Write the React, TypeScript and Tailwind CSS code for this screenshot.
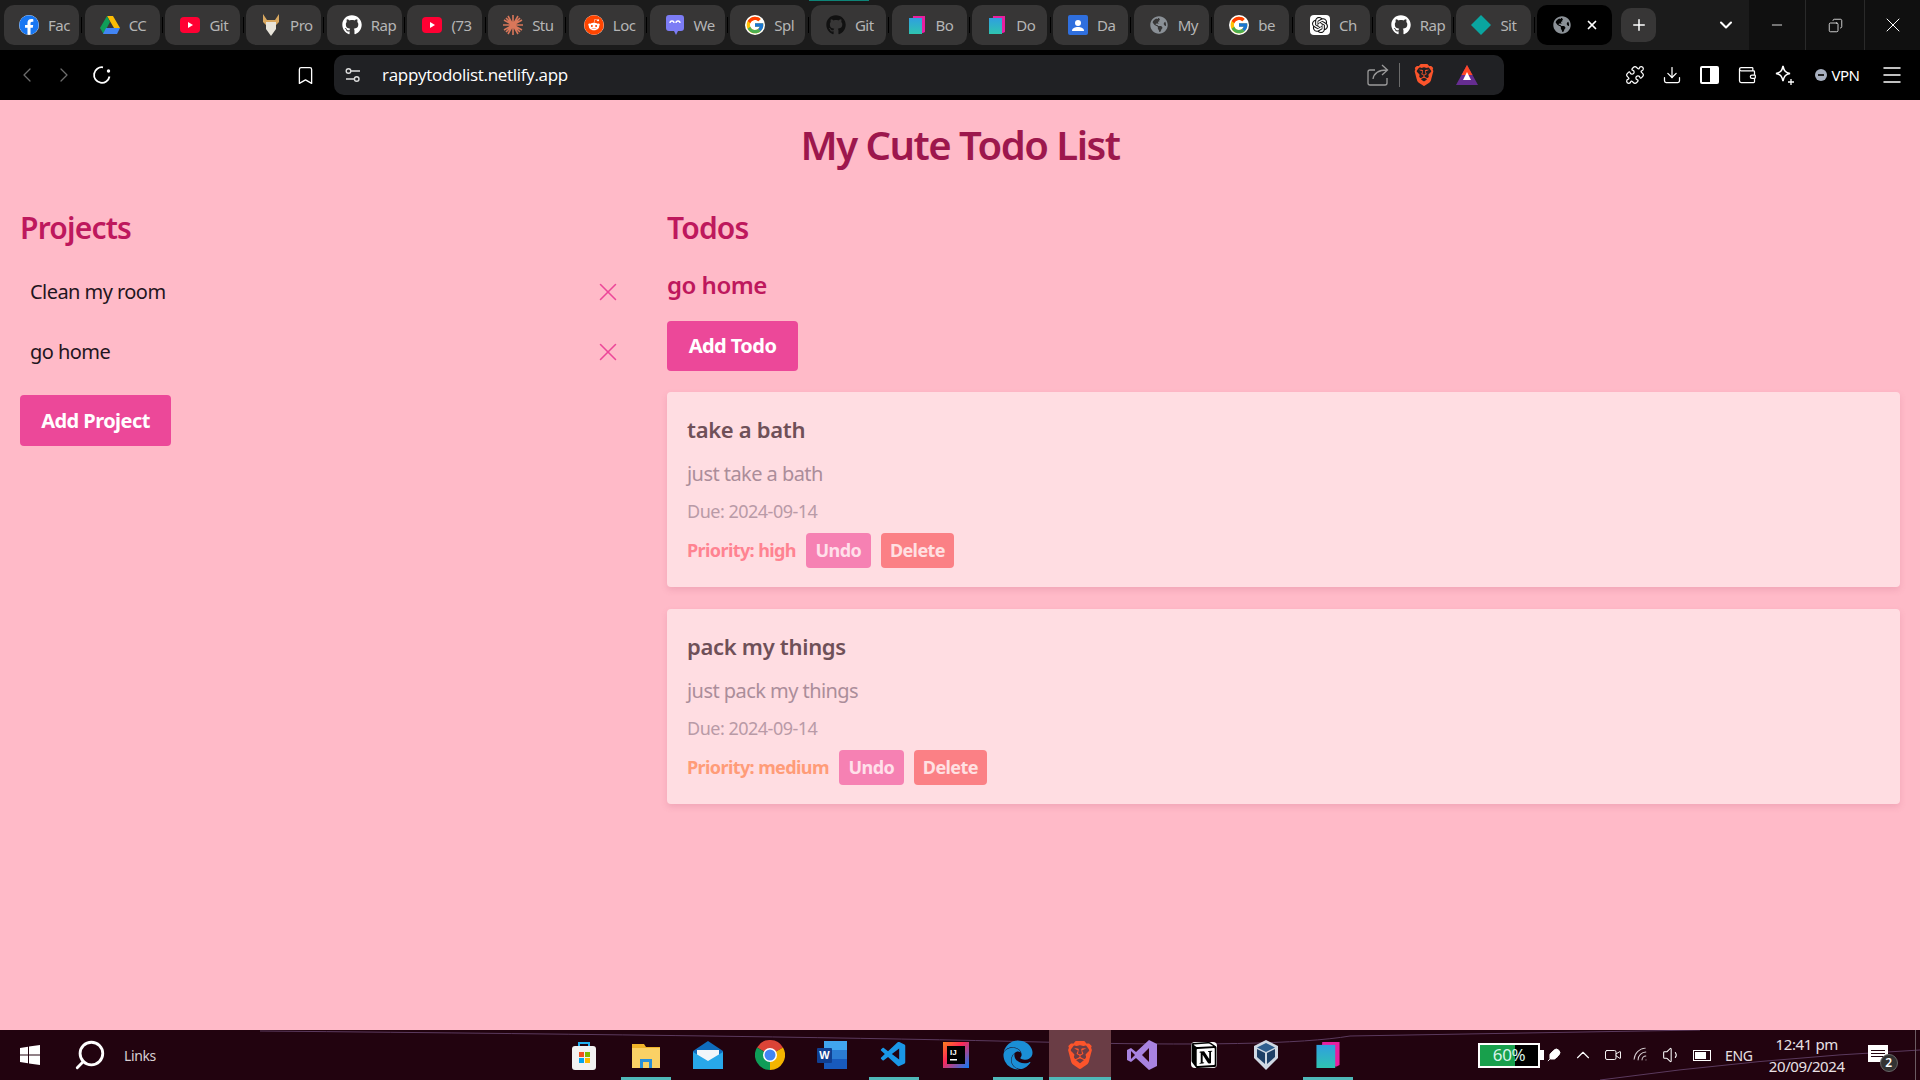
import { FaEdge, FaFacebook, FaGithub, FaGlobeAmericas, FaReddit } from "react-icons/fa";
import { FcGoogle } from "react-icons/fc";
import { SiBrave, SiNotion, SiOpenai } from "react-icons/si";
import { VscVscode } from "react-icons/vsc";
import {
  Bookmark,
  ChevronDown,
  ChevronLeft,
  ChevronRight,
  ChevronUp,
  Copy,
  Download,
  Feather,
  Menu,
  Minus,
  Plus,
  Puzzle,
  Search,
  Volume1,
  Video,
  Wallet,
  Wifi,
  X,
} from "lucide-react";
import type { ReactNode } from "react";

const font = "font-['Noto_Sans','Open_Sans',sans-serif]";

// small drawn icons
const YouTube = () => (
  <svg width="20" height="16" viewBox="0 0 20 16">
    <rect width="20" height="16" rx="4" fill="#ff0033" />
    <path d="M8 5l5 3-5 3z" fill="#fff" />
  </svg>
);
const Drive = () => (
  <svg width="20" height="18" viewBox="0 0 20 18">
    <path d="M7 0h6l7 12h-6z" fill="#fbbc04" />
    <path d="M7 0l3 6-6.500 12L0 12z" fill="#0f9d58" />
    <path d="M6 12h14l-3 6H3z" fill="#4285f4" />
  </svg>
);
const Viking = () => (
  <svg width="18" height="22" viewBox="0 0 18 22">
    <path d="M1 0l4 6h8l4-6 0 8-3 3H4L1 8z" fill="#d9a860" />
    <path d="M4 8h10v7l-5 7-5-7z" fill="#e8e4da" />
  </svg>
);
const Burst = () => (
  <svg width="20" height="20" viewBox="0 0 20 20" stroke="#d9775a" strokeWidth="1.6">
    <path d="M10 0v20M0 10h20M3 3l14 14M17 3L3 17M5 1l10 18M15 1L5 19M1 5l18 10M19 5L1 15" />
  </svg>
);
const Chat = () => (
  <svg width="20" height="22" viewBox="0 0 20 22">
    <path d="M4 1h12a3 3 0 013 3v10a3 3 0 01-3 3h-3l-2 4-2-4H4a3 3 0 01-3-3V4a3 3 0 013-3z" fill="#7c7cf5" />
    <path d="M5 9a2 2 0 014 0M11 9a2 2 0 014 0" stroke="#fff" strokeWidth="1.3" fill="none" />
  </svg>
);
const Stack = ({ size = 18 }: { size?: number }) => (
  <svg width={size} height={size} viewBox="0 0 18 18">
    <path d="M5 0h12v16l-2 1H4z" fill="#e81fa0" />
    <path d="M1 2h13v16H1z" fill="url(#stackFill)" />
    <defs>
      <linearGradient id="stackFill" x1="0" y1="0" x2="0" y2="1">
        <stop offset="0" stopColor="#2f9fe0" />
        <stop offset="1" stopColor="#2fc4b0" />
      </linearGradient>
    </defs>
  </svg>
);
const Contact = () => (
  <svg width="20" height="20" viewBox="0 0 20 20">
    <rect width="20" height="20" rx="2" fill="#2f6fde" />
    <circle cx="10" cy="8" r="3" fill="#fff" />
    <path d="M4 16c0-3 3-4 6-4s6 1 6 4z" fill="#fff" />
  </svg>
);
const Diamond = () => (
  <svg width="20" height="20" viewBox="0 0 20 20">
    <path d="M10 0l10 10-10 10L0 10z" fill="#0aa5a0" />
  </svg>
);
const Bat = () => (
  <svg width="22" height="20" viewBox="0 0 22 20">
    <path d="M11 0l11 20H0z" fill="#662d91" />
    <path d="M11 0l5.500 10h-11z" fill="#ff4724" />
    <path d="M11 7l4 8H7z" fill="#fff" />
  </svg>
);
const Reload = () => (
  <svg width="20" height="20" viewBox="0 0 20 20" fill="none" stroke="#fff" strokeWidth="1.8">
    <path d="M17.500 11.500A7.800 7.800 0 1 1 11 2.300" />
    <circle cx="16.500" cy="6" r="1.700" fill="#fff" stroke="none" />
  </svg>
);
const SiteSettings = () => (
  <svg width="18" height="18" viewBox="0 0 18 18" fill="none" stroke="#ddd" strokeWidth="1.4">
    <circle cx="4.500" cy="5" r="2.300" />
    <path d="M7 5h9M2 13h8" />
    <circle cx="12.700" cy="13" r="2.300" />
  </svg>
);
const ShareArrow = () => (
  <svg width="22" height="22" viewBox="0 0 22 22" fill="none" stroke="#9a9a9a" strokeWidth="1.3">
    <path d="M8 6H3a2 2 0 00-2 2v11a2 2 0 002 2h15a2 2 0 002-2v-5" />
    <path d="M6 15c1-6 5-9 14-9M15 1l5.500 5-5.500 5" />
  </svg>
);
const Leo = () => (
  <svg width="22" height="22" viewBox="0 0 22 22" fill="none" stroke="#fff" strokeWidth="1.5">
    <path d="M9 2c1 5 2.500 6.500 7 7.500-4.500 1-6 2.500-7 7.500-1-5-2.500-6.500-7-7.500 4.500-1 6-2.500 7-7.500z" />
    <path d="M17 15v6M14 18h6" strokeWidth="1.300" />
  </svg>
);
const WinLogo = () => (
  <svg width="20" height="20" viewBox="0 0 20 20" fill="#fff">
    <path d="M0 3l8-1.200V9.500H0zM9 1.600L20 0v9.500H9zM0 10.500h8v7.700L0 17zM9 10.500h11V20L9 18.400z" />
  </svg>
);
const StoreIcon = () => (
  <svg width="24" height="29" viewBox="0 0 24 29">
    <path d="M7 7V2h10v5" fill="none" stroke="#22b0f0" strokeWidth="2" />
    <rect y="5" width="24" height="24" rx="3" fill="#f2f2f2" />
    <rect x="7" y="11" width="5" height="5" fill="#f25022" />
    <rect x="13" y="11" width="5" height="5" fill="#7fba00" />
    <rect x="7" y="17" width="5" height="5" fill="#00a4ef" />
    <rect x="13" y="17" width="5" height="5" fill="#ffb900" />
  </svg>
);
const FolderIcon = () => (
  <svg width="28" height="26" viewBox="0 0 28 26">
    <path d="M0 2h12l2 3h14v21H0z" fill="#f0b429" />
    <path d="M0 6h28v20H0z" fill="#fad165" />
    <path d="M8 26v-9h12v9h-3v-6h-6v6z" fill="#2a8fd8" />
  </svg>
);
const MailIcon = () => (
  <svg width="30" height="28" viewBox="0 0 30 28">
    <path d="M0 10L15 0l15 10v18H0z" fill="#0f6cbd" />
    <path d="M4 9h22v10l-11 6-11-6z" fill="#f2f6fa" />
    <path d="M0 11l15 9 15-9v17H0z" fill="#28a8ea" />
  </svg>
);
const ChromeIcon = () => (
  <svg width="30" height="30" viewBox="0 0 30 30">
    <path d="M15 15L2 7.500A15 15 0 0128 7.500z" fill="#db4437" />
    <path d="M15 15L28 7.500A15 15 0 0115 30z" fill="#f4b400" />
    <path d="M15 15v15A15 15 0 012 7.500z" fill="#0f9d58" />
    <circle cx="15" cy="15" r="7" fill="#fff" />
    <circle cx="15" cy="15" r="5.500" fill="#4285f4" />
  </svg>
);
const WordIcon = () => (
  <svg width="30" height="28" viewBox="0 0 30 28">
    <path d="M7 0h23v28H7z" fill="#2b7cd3" />
    <path d="M7 0h23v9H7z" fill="#41a5ee" />
    <path d="M7 18h23v10H7z" fill="#185abd" />
    <rect y="7" width="15" height="15" rx="1" fill="#103f91" />
    <text x="7.500" y="18" textAnchor="middle" fontSize="11" fontWeight="700" fill="#fff" fontFamily="Liberation Sans, sans-serif">W</text>
  </svg>
);
const IdeaIcon = () => (
  <svg width="26" height="26" viewBox="0 0 26 26">
    <defs>
      <linearGradient id="ideaFill" x1="0" y1="0" x2="1" y2="1">
        <stop offset="0" stopColor="#fc801d" />
        <stop offset="0.4" stopColor="#fe2857" />
        <stop offset="1" stopColor="#087cfa" />
      </linearGradient>
    </defs>
    <rect width="26" height="26" fill="url(#ideaFill)" />
    <rect x="4" y="4" width="18" height="18" fill="#000" />
    <text x="7" y="13" fontSize="8" fontWeight="700" fill="#fff" fontFamily="Liberation Sans, sans-serif">IJ</text>
    <rect x="7" y="17" width="7" height="1.500" fill="#fff" />
  </svg>
);
const VsIcon = () => (
  <svg width="30" height="30" viewBox="0 0 30 30">
    <path d="M22 0l8 4v22l-8 4L9 18l-5 4-4-2V10l4-2 5 4z" fill="#a883e0" />
    <path d="M22 8l-7 7 7 7z" fill="#2a0410" />
    <path d="M4 11l4 4-4 4z" fill="#2a0410" />
  </svg>
);
const VboxIcon = () => (
  <svg width="24" height="30" viewBox="0 0 24 30">
    <path d="M12 0l12 6v12l-12 12L0 18V6z" fill="#cfd8e3" />
    <path d="M12 3l9 4.500-9 4.500-9-4.500z" fill="#2f5f8f" />
    <path d="M3 9l8 4v11l-8-7z" fill="#1d3f66" />
    <path d="M21 9l-8 4v11l8-7z" fill="#1d3f66" />
  </svg>
);

const tabs: { icon: ReactNode; label: string }[] = [
  { icon: <span className="flex rounded-full bg-white"><FaFacebook size={20} color="#1877f2" /></span>, label: "Fac" },
  { icon: <Drive />, label: "CC" },
  { icon: <YouTube />, label: "Git" },
  { icon: <Viking />, label: "Pro" },
  { icon: <FaGithub size={20} color="#fff" />, label: "Rap" },
  { icon: <YouTube />, label: "(73" },
  { icon: <Burst />, label: "Stu" },
  { icon: <span className="flex rounded-full bg-white"><FaReddit size={20} color="#ff4500" /></span>, label: "Loc" },
  { icon: <Chat />, label: "We" },
  { icon: <span className="flex rounded-full bg-white"><FcGoogle size={20} /></span>, label: "Spl" },
  { icon: <FaGithub size={20} color="#111" />, label: "Git" },
  { icon: <Stack />, label: "Bo" },
  { icon: <Stack />, label: "Do" },
  { icon: <Contact />, label: "Da" },
  { icon: <FaGlobeAmericas size={18} color="#8a9096" />, label: "My" },
  { icon: <span className="flex rounded-full bg-white"><FcGoogle size={20} /></span>, label: "be" },
  { icon: <span className="flex rounded-[4px] bg-white p-[2px]"><SiOpenai size={16} color="#111" /></span>, label: "Ch" },
  { icon: <FaGithub size={20} color="#fff" />, label: "Rap" },
  { icon: <Diamond />, label: "Sit" },
];

const apps: { icon: ReactNode; bar?: boolean }[] = [
  { icon: <StoreIcon /> },
  { icon: <FolderIcon />, bar: true },
  { icon: <MailIcon /> },
  { icon: <ChromeIcon /> },
  { icon: <WordIcon /> },
  { icon: <VscVscode size={30} color="#1a97e6" />, bar: true },
  { icon: <IdeaIcon /> },
  { icon: <FaEdge size={30} color="#1b8fd6" />, bar: true },
  { icon: <SiBrave size={28} color="#fb542b" />, bar: true },
  { icon: <VsIcon /> },
  { icon: <span className="flex rounded-[4px] bg-white"><SiNotion size={26} color="#000" /></span> },
  { icon: <VboxIcon /> },
  { icon: <Stack size={26} />, bar: true },
];

const todos = [
  { title: "take a bath", text: "just take a bath", priority: "high", tone: "text-[#ff8391]" },
  { title: "pack my things", text: "just pack my things", priority: "medium", tone: "text-[#ff9c78]" },
];

function Slot({ children, w = "w-[37.5px]" }: { children: ReactNode; w?: string }) {
  return <div className={`flex shrink-0 items-center justify-center ${w}`}>{children}</div>;
}

export default function App() {
  return (
    <div className={`flex h-screen w-full flex-col overflow-hidden bg-[#ffbac8] ${font}`}>
      {/* tab strip */}
      <div className="relative flex h-[50px] shrink-0 items-center bg-[#1b1b1b] pl-1">
        <div className="absolute left-[809px] top-0 h-px w-[60px] bg-[#0d8478]" />
        {tabs.map((t, i) => (
          <div key={i} className="flex items-center">
            <div className="flex h-10 w-[75px] items-center gap-[9px] rounded-[10px] bg-[#373636] pl-[15px]">
              <span className="flex w-5 shrink-0 justify-center">{t.icon}</span>
              <span className="whitespace-nowrap text-[15px] tracking-[-0.5px] text-[#b5b5b5]">{t.label}</span>
            </div>
            <div className="mx-[2.35px] h-4 w-px bg-black" />
          </div>
        ))}
        <div className="flex h-10 w-[75px] items-center justify-between rounded-[10px] bg-black pl-4 pr-[13px]">
          <FaGlobeAmericas size={18} color="#8a9096" />
          <X size={14} color="#fff" strokeWidth={3} />
        </div>
        <div className="ml-[9px] flex h-[34px] w-[35px] items-center justify-center rounded-[10px] bg-[#373636]">
          <Plus size={18} color="#fff" />
        </div>
        <div className="ml-[60px] flex w-5 justify-center">
          <ChevronDown size={20} color="#fff" strokeWidth={2.5} />
        </div>
        <div className="ml-auto flex h-full items-center bg-[#101010] text-white">
          <Slot w="w-[56px]"><Minus size={16} strokeWidth={1.25} /></Slot>
          <div className="flex h-full w-[59px] items-center justify-center border-l border-[#2a2a2a]">
            <Copy size={15} strokeWidth={1.25} className="-scale-x-100" />
          </div>
          <div className="flex h-full w-[56px] items-center justify-center border-l border-[#2a2a2a]">
            <X size={24} strokeWidth={1} />
          </div>
        </div>
      </div>

      {/* toolbar */}
      <div className="flex h-[50px] shrink-0 items-center bg-black pl-2 text-white">
        <Slot><ChevronLeft size={24} strokeWidth={1.25} color="#6d6d6d" /></Slot>
        <Slot><ChevronRight size={24} strokeWidth={1.25} color="#6d6d6d" /></Slot>
        <Slot><Reload /></Slot>
        <div className="ml-[166px]">
          <Slot><Bookmark size={21} strokeWidth={1.5} /></Slot>
        </div>
        <div className="ml-[10px] flex h-10 w-[1170px] shrink-0 items-center rounded-[10px] bg-[#202124]">
          <span className="ml-[10px] flex"><SiteSettings /></span>
          <span className="ml-[20px] font-['Open_Sans',sans-serif] text-[17px] tracking-[-0.3px] text-white">rappytodolist.netlify.app</span>
          <span className="ml-auto flex"><ShareArrow /></span>
          <div className="ml-[10px] h-6 w-px bg-[#6b6b6b]" />
          <span className="ml-[13px] flex"><SiBrave size={22} color="#fb542b" /></span>
          <span className="ml-[21px] mr-[26px] flex"><Bat /></span>
        </div>
        <div className="ml-[112px] flex items-center">
          <Slot><Puzzle size={20} strokeWidth={1.5} /></Slot>
          <Slot><Download size={20} strokeWidth={1.5} /></Slot>
          <Slot>
            <div className="flex h-[18px] w-[19px] rounded-[2px] border-2 border-white">
              <div className="h-full w-1/2" />
              <div className="h-full w-1/2 bg-white" />
            </div>
          </Slot>
          <Slot><Wallet size={20} strokeWidth={1.5} /></Slot>
          <Slot><Leo /></Slot>
        </div>
        <div className="ml-[11px] flex items-center gap-[5px]">
          <div className="flex h-3 w-3 items-center justify-center rounded-full bg-[#a8b0c0]">
            <div className="h-[2px] w-[6px] bg-[#222]" />
          </div>
          <span className="text-[15px] tracking-[-0.5px] text-white">VPN</span>
        </div>
        <Menu size={24} strokeWidth={1.5} className="ml-[21px]" />
      </div>

      {/* page */}
      <main className="min-h-0 flex-1 px-5 pt-[18px]">
        <h1 className="text-center text-[40px] leading-[54px] font-semibold tracking-[-1.5px] text-[#9d174d]">
          My Cute Todo List
        </h1>
        <div className="mt-[38px] flex gap-10">
          <section className="w-[607px] shrink-0">
            <h2 className="text-[30px] leading-[36px] font-semibold tracking-[-0.8px] text-[#be185d]">Projects</h2>
            <ul className="mt-4">
              {["Clean my room", "go home"].map((p) => (
                <li key={p} className="flex h-[60px] items-center justify-between pl-2.5 pr-1">
                  <span className="text-[20px] tracking-[-0.55px] text-[#1f1520]">{p}</span>
                  <X size={30} strokeWidth={1.25} className="text-[#ec4899]" />
                </li>
              ))}
            </ul>
            <button className="mt-[13px] h-[51px] w-[151px] rounded-[4px] bg-[#ec4899] text-[20px] font-bold tracking-[-0.55px] text-white">
              Add Project
            </button>
          </section>

          <section className="min-w-0 flex-1">
            <h2 className="text-[30px] leading-[36px] font-semibold tracking-[-0.8px] text-[#be185d]">Todos</h2>
            <h3 className="mt-[21px] text-[24px] leading-[36px] font-semibold tracking-[-0.5px] text-[#be185d]">go home</h3>
            <button className="mt-[18px] h-[50px] w-[131px] rounded-[4px] bg-[#ec4899] text-[20px] font-bold tracking-[-0.55px] text-white">
              Add Todo
            </button>
            <div className="mt-[21px] flex flex-col gap-[22px]">
              {todos.map((t) => (
                <article key={t.title} className="h-[195px] rounded-[4px] bg-[#ffdde2] px-5 pt-5 shadow-[0_3px_6px_rgba(180,80,110,0.18)]">
                  <h4 className="text-[22px] leading-[34px] font-semibold tracking-[-0.3px] text-[#6f5058]">{t.title}</h4>
                  <p className="mt-[14px] text-[20px] leading-[28px] tracking-[-0.55px] text-[#ab8d9a]">{t.text}</p>
                  <p className="mt-[10px] text-[18px] leading-[26px] tracking-[-0.5px] text-[#b99aa7]">Due: 2024-09-14</p>
                  <div className="mt-[9px] flex items-center gap-2.5">
                    <span className={`text-[18px] font-bold tracking-[-0.6px] ${t.tone}`}>Priority: {t.priority}</span>
                    <span className="flex h-[35px] w-[65px] items-center justify-center rounded-[4px] bg-[#f681b3] text-[18px] font-bold tracking-[-0.6px] text-[#ffe0ea]">Undo</span>
                    <span className="flex h-[35px] w-[73px] items-center justify-center rounded-[4px] bg-[#fb8085] text-[18px] font-bold tracking-[-0.6px] text-[#ffe0e2]">Delete</span>
                  </div>
                </article>
              ))}
            </div>
          </section>
        </div>
      </main>

      {/* taskbar */}
      <footer className="relative flex h-[50px] shrink-0 items-center bg-[#22030f] text-white">
        <svg className="pointer-events-none absolute inset-0" width="1920" height="50" fill="none">
          <path d="M260 1Q800 6 1040 12T1350 6L1700 0" stroke="#5b3a5e" strokeWidth="1" />
          <path d="M1600 50Q1760 28 1920 20" stroke="#5b3a5e" strokeWidth="1" />
        </svg>
        <div className="relative flex w-[553px] shrink-0 items-center pl-5">
          <WinLogo />
          <Search size={34} strokeWidth={2} className="ml-[33px] -scale-x-100" />
          <span className="ml-[17px] text-[14px] tracking-[-0.4px] text-[#d8d0d4]">Links</span>
        </div>
        {apps.map((a, i) => (
          <div key={i} className={`relative flex h-full w-[62px] shrink-0 items-center justify-center ${i === 8 ? "bg-[#6a3d45]" : ""}`}>
            {a.icon}
            {a.bar && <div className={`absolute bottom-0 h-[3px] bg-[#4fb8b8] ${i === 8 ? "w-full" : "w-[50px]"}`} />}
          </div>
        ))}
        <div className="relative ml-[119px] flex items-center">
          <div className="relative flex h-[25px] w-[62px] items-center justify-center border-[2px] border-white bg-black">
            <div className="absolute inset-y-0 left-0 w-[60%] bg-[#18a04c]" />
            <span className="relative text-[17px] tracking-[-0.4px] text-[#d8f4ea]">60%</span>
          </div>
          <div className="h-[10px] w-[4px] bg-white" />
        </div>
        <Feather size={14} fill="#fff" strokeWidth={1.5} className="relative ml-[3px]" />
        <ChevronUp size={22} strokeWidth={1.25} className="relative ml-[11px]" />
        <Video size={18} strokeWidth={1.25} className="relative ml-[10px]" />
        <Wifi size={19} strokeWidth={1.25} className="relative ml-[10px] -rotate-45 text-[#d8d0d4]" />
        <Volume1 size={20} strokeWidth={1.25} className="relative ml-[11px]" />
        <div className="relative ml-[11px] flex h-[11px] w-[18px] border border-white p-px">
          <div className="h-full w-3/4 bg-white" />
        </div>
        <span className="relative ml-[14px] text-[14px] tracking-[-0.3px] text-[#e8e0e4]">ENG</span>
        <div className="relative ml-[14px] flex w-[80px] flex-col items-center text-[15px] leading-[22px] tracking-[-0.4px] text-[#e8e0e4]">
          <span>12:41 pm</span>
          <span>20/09/2024</span>
        </div>
        <div className="relative ml-[21px] h-[20px] w-[20px]">
          <div className="flex h-[17px] w-[20px] flex-col justify-center gap-[2px] bg-white px-[3px]">
            <div className="h-px bg-[#22030f]" />
            <div className="h-px bg-[#22030f]" />
            <div className="h-px bg-[#22030f]" />
          </div>
          <span className="absolute -bottom-[7px] -right-[10px] flex h-[18px] w-[18px] items-center justify-center rounded-full border border-[#666] bg-[#333] text-[12px] font-semibold text-white">2</span>
        </div>
        <div className="absolute bottom-0 right-[4px] top-0 w-px bg-[#6b5b62]" />
      </footer>
    </div>
  );
}
